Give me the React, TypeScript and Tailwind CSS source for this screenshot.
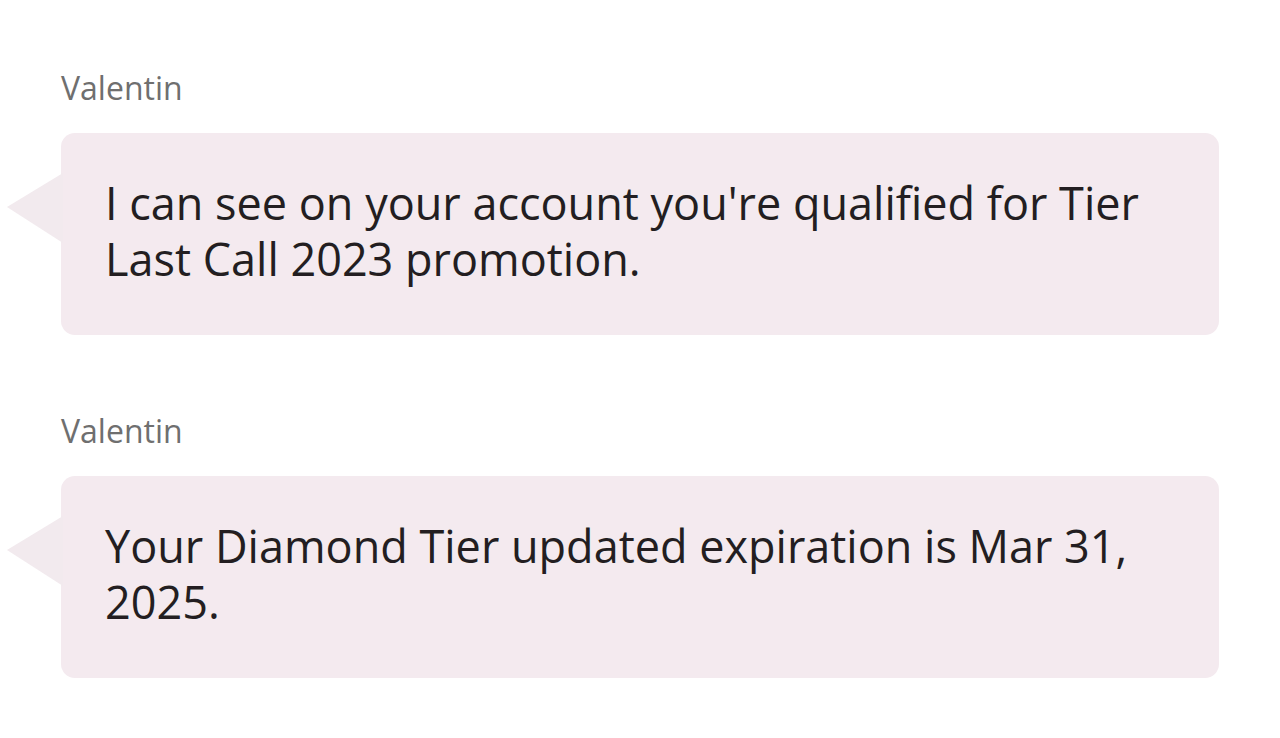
import React from "react";

const messages = [
  {
    author: "Valentin",
    text: "I can see on your account you're qualified for Tier Last Call 2023 promotion.",
  },
  {
    author: "Valentin",
    text: "Your Diamond Tier updated expiration is Mar 31, 2025.",
  },
];

function Bubble({ author, text }: { author: string; text: string }) {
  return (
    <div className="flex flex-col">
      <div className="text-[32px] leading-[40px] text-[#6f6f6f]">{author}</div>
      <div className="relative mt-[25px] h-[202px] rounded-[14px] bg-[#f4eaef] pl-[44px] pr-[60px] pt-[42px]">
        <svg
          className="absolute left-[-54px] top-[40px]"
          width="56"
          height="70"
          viewBox="0 0 56 70"
        >
          <path d="M56 0 L0 34 L56 70 Z" fill="#f2eaee" />
        </svg>
        <p className="text-[45px] leading-[56px] text-[#231e21]">{text}</p>
      </div>
    </div>
  );
}

export default function App() {
  return (
    <div
      className="flex min-h-[738px] flex-col gap-[76px] bg-white px-[61px] pt-[68px]"
      style={{ fontFamily: "'Open Sans', 'Noto Sans', sans-serif" }}
    >
      {messages.map((m, i) => (
        <Bubble key={i} author={m.author} text={m.text} />
      ))}
    </div>
  );
}
